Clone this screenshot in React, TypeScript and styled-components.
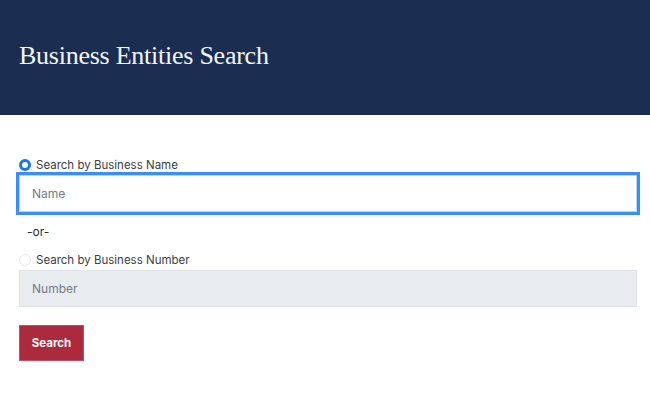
import React from "react";
import styled, { createGlobalStyle } from "styled-components";

const Global = createGlobalStyle`
  html, body { margin: 0; padding: 0; background: #fff; }
  body { font-family: Inter, "Noto Sans", sans-serif; }
  * { box-sizing: border-box; }
`;

const Header = styled.header`
  height: 115px;
  background: #1b2d50;
  display: flex;
  align-items: center;
  padding: 0 19px;
`;

const Title = styled.h1`
  margin: 0 0 4px 0;
  font-family: "Liberation Serif", "DejaVu Serif", serif;
  font-weight: 400;
  font-size: 26px;
  color: #f4f6fa;
  letter-spacing: -0.25px;
`;

const Form = styled.form`
  display: flex;
  flex-direction: column;
  align-items: flex-start;
  padding: 42px 13px 0 19px;
`;

const OptionRow = styled.label<{ $mt?: number }>`
  display: flex;
  align-items: center;
  gap: 5px;
  height: 16px;
  margin-top: ${(p) => p.$mt ?? 0}px;
  font-size: 11.5px;
  color: #3d3d3d;
  cursor: pointer;
`;

const Radio = styled.span<{ $checked?: boolean }>`
  width: 12px;
  height: 12px;
  border-radius: 50%;
  flex: none;
  background: #fff;
  border: ${(p) => (p.$checked ? "3px solid #1677f0" : "1px solid #e6e8eb")};
`;

const TextInput = styled.input<{ $focused?: boolean; $mt?: number }>`
  width: 100%;
  height: 37px;
  margin-top: ${(p) => p.$mt ?? 0}px;
  padding: 0 12px;
  font-family: Inter, "Noto Sans", sans-serif;
  font-size: 12px;
  color: #333;
  border-radius: 0;
  outline: none;
  background: ${(p) => (p.$focused ? "#fff" : "#e9ecef")};
  border: 1px solid ${(p) => (p.$focused ? "#b7d6fb" : "#dfe2e6")};
  box-shadow: ${(p) => (p.$focused ? "0 0 0 3px #3a8ff5" : "none")};
  &::placeholder { color: #747b83; }
`;

const OrText = styled.div`
  margin: 12px 0 0 8px;
  height: 16px;
  line-height: 16px;
  font-size: 12px;
  color: #2a2a2a;
`;

const Button = styled.button`
  margin-top: 18px;
  width: 65px;
  height: 36px;
  background: #ac2a3d;
  border: 1px solid #c0505f;
  color: #fff;
  font-family: Inter, "Noto Sans", sans-serif;
  font-weight: 700;
  font-size: 11.5px;
  cursor: pointer;
`;

export default function App() {
  return (
    <>
      <Global />
      <Header>
        <Title>Business Entities Search</Title>
      </Header>
      <Form onSubmit={(e) => e.preventDefault()}>
        <OptionRow>
          <Radio $checked />
          Search by Business Name
        </OptionRow>
        <TextInput $focused $mt={2} placeholder="Name" />
        <OrText>-or-</OrText>
        <OptionRow $mt={12}>
          <Radio />
          Search by Business Number
        </OptionRow>
        <TextInput $mt={2} placeholder="Number" />
        <Button type="submit">Search</Button>
      </Form>
    </>
  );
}
